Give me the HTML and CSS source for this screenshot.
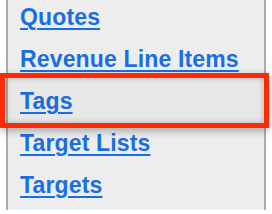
FILE: index.html
```html
<!DOCTYPE html>
<html lang="en">
<head>
    <meta charset="UTF-8">
    <title>Module Menu</title>
    <link rel="stylesheet" href="styles.css">
</head>
<body>
    <!-- Module list -->
    <div class="module-panel">
        <ul class="module-list">
            <li class="module-item"><a href="#">Quotes</a></li>
            <li class="module-item"><a href="#">Revenue Line Items</a></li>
            <li class="module-item"><a href="#">Tags</a></li>
            <li class="module-item"><a href="#">Target Lists</a></li>
            <li class="module-item"><a href="#">Targets</a></li>
        </ul>

        <!-- Callout around the highlighted item -->
        <div class="callout-box"></div>
    </div>
</body>
</html>
```

FILE: styles.css
```css
:root {
    --panel-bg: #ededed;
    --panel-border: #acacac;
    --link-blue: #1a6ee3;
    --callout-red: #fe2a06;
}

body {
    margin: 0;
    padding: 0;
    background: #ffffff;
    font-family: "Liberation Sans", Arial, sans-serif;
    overflow: hidden;
}

/* Panel */
.module-panel {
    margin-left: 6px;
    width: 256px;
    height: 214px;
    background: var(--panel-bg);
    border-left: 2px solid var(--panel-border);
    border-right: 2px solid var(--panel-border);
}

.module-list {
    list-style: none;
    margin: -4px 0 0;
    padding: 0 0 0 12px;
}

.module-item {
    height: 42px;
    line-height: 42px;
    font-size: 23px;
    font-weight: bold;
    letter-spacing: 0.15px;
}

.module-item a {
    color: var(--link-blue);
    text-decoration: underline;
    text-decoration-thickness: 2px;
    text-underline-offset: 3px;
}

/* Red callout */
.callout-box {
    position: absolute;
    left: 0;
    top: 73px;
    width: 259px;
    height: 45px;
    border: 5px solid var(--callout-red);
    box-shadow: 0 3px 8px rgba(0, 0, 0, 0.3), inset 0 0 6px rgba(0, 0, 0, 0.25);
    background: rgba(0, 0, 0, 0.02);
}
```
